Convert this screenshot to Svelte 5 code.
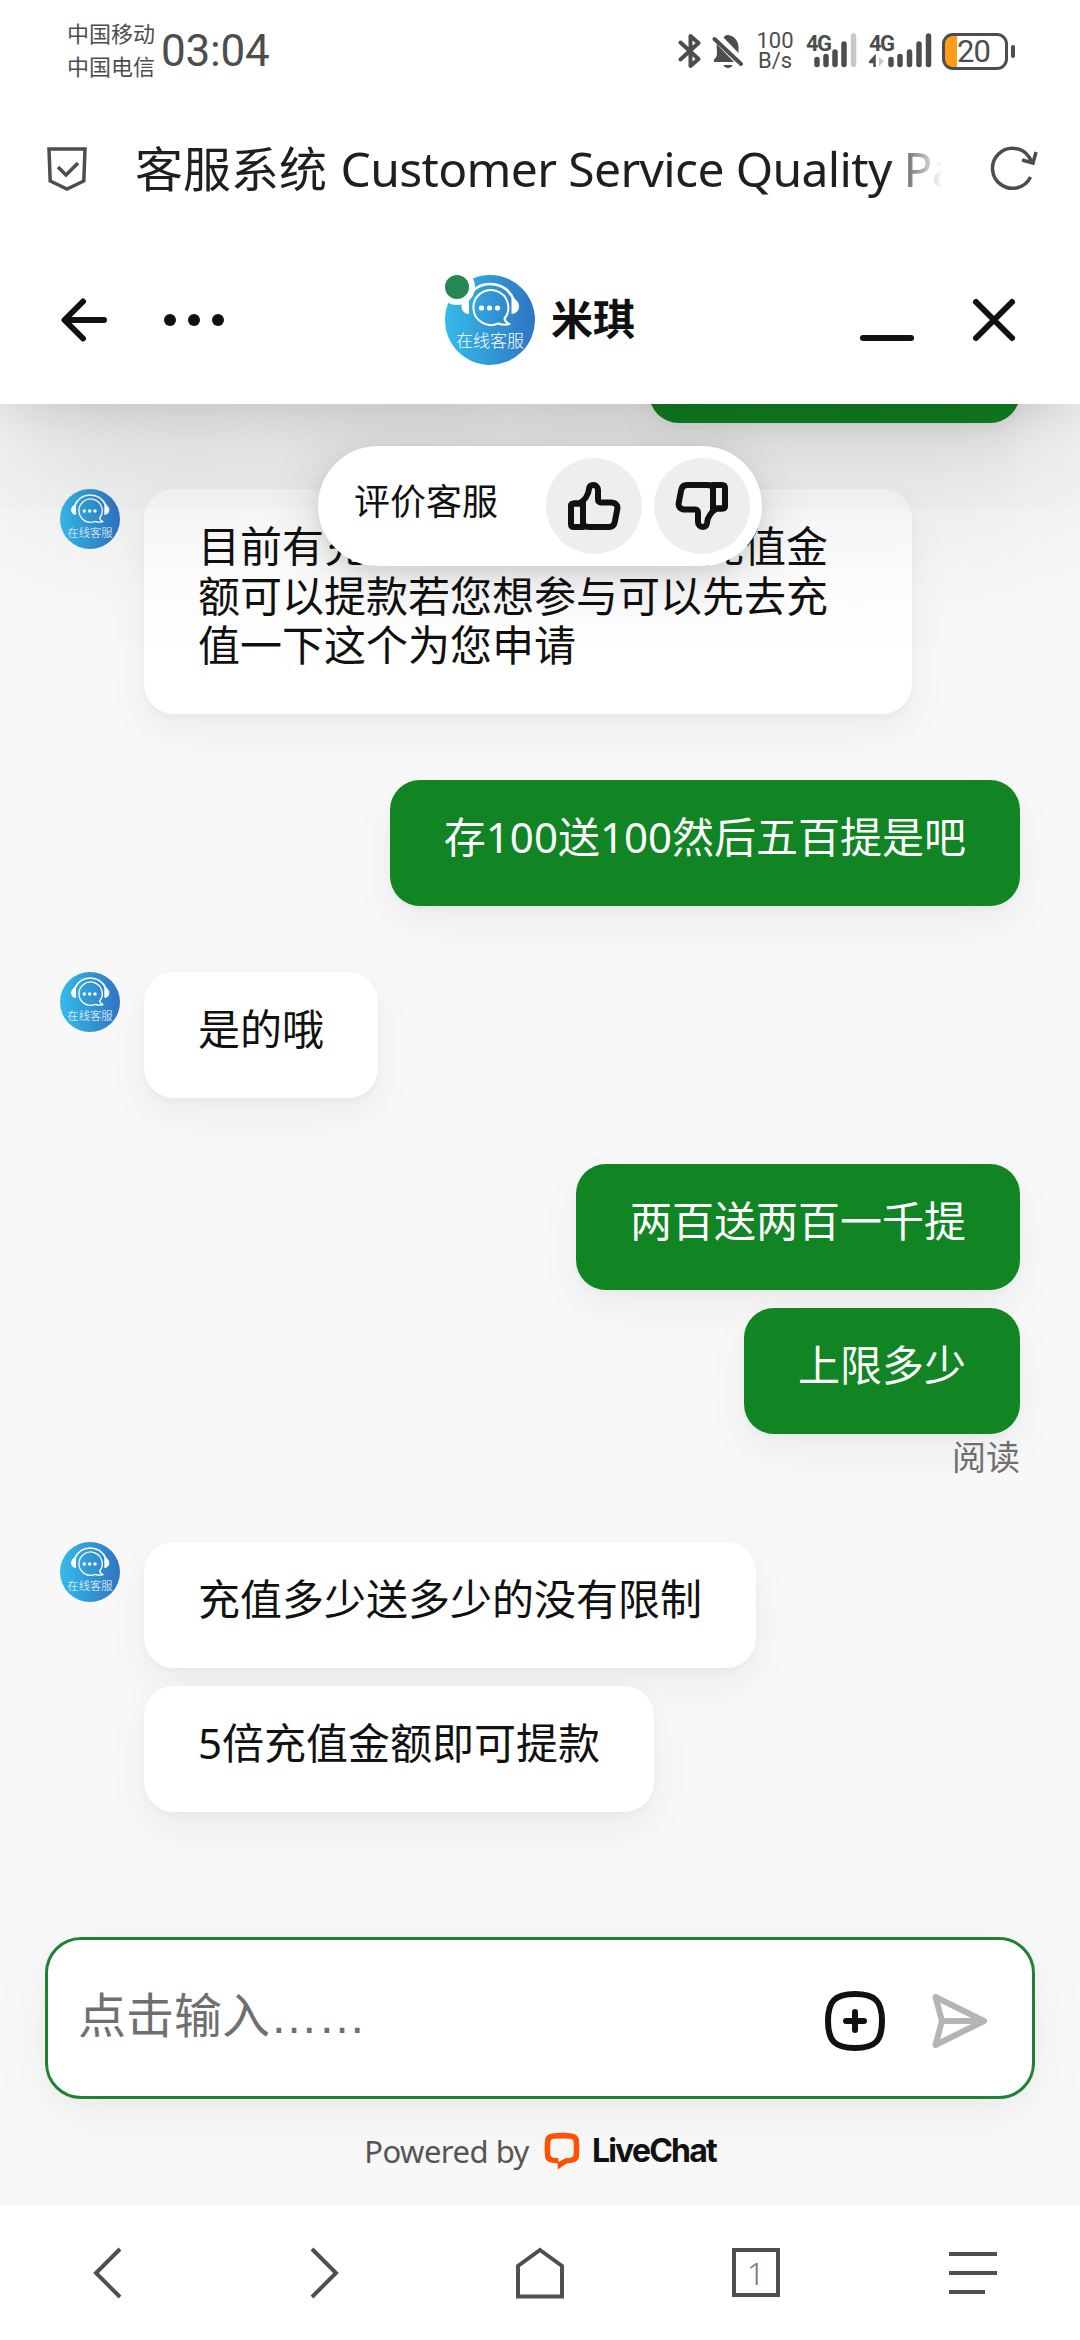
<script>
    const groups = [
        { from: "me", messages: ["存200送200几倍"], clipped: true },
        {
            from: "agent",
            messages: ["目前有充值送彩金活动五倍充值金额可以提款若您想参与可以先去充值一下这个为您申请"],
        },
        { from: "me", messages: ["存100送100然后五百提是吧"] },
        { from: "agent", messages: ["是的哦"] },
        { from: "me", messages: ["两百送两百一千提", "上限多少"], status: "阅读" },
        { from: "agent", messages: ["充值多少送多少的没有限制", "5倍充值金额即可提款"] },
    ];

    const thumb =
        "M4 24.500q0-3 3-3h5.500C16.500 19 21.500 13.500 22 7c.3-2.600 2-4 4.300-4C29 3 31 5.200 31 8v9.500c0 1.500.8 3 2.500 3H44c4.500 0 7 2.800 6.300 6.500l-2.500 13c-.6 3.200-2.700 5-5.800 5H22c-3.500 0-5.500-1-6-3.500";
</script>

{#snippet avatar()}
    <svg class="avatar-art" viewBox="0 0 90 90">
        <g fill="none" stroke="#fff" stroke-linecap="round">
            <path d="M22 25C27 14 35 9 45 9s19 5 24 16" stroke-width="2.600" />
            <path
                d="M59.500 43.500A17.500 17.500 0 1 0 53 48.500c4 1.500 8 1.500 11.500.5-3-1-4.500-3-5-5.500"
                stroke-width="2"
                stroke-linejoin="round"
            />
        </g>
        <path d="M24 22.500v16.500c-5-.5-7.500-3.500-7.500-7.500s3-7.500 7.500-9z" fill="#fff" />
        <path d="M66.500 22.500v16.500c5-.5 7.500-3.500 7.500-7.500s-3-7.500-7.500-9z" fill="#fff" />
        <g fill="#fff">
            <circle cx="36.500" cy="33" r="2.600" />
            <circle cx="44.500" cy="33" r="2.600" />
            <circle cx="52.500" cy="33" r="2.600" />
        </g>
        <text x="45" y="72" text-anchor="middle" class="avatar-label">在线客服</text>
    </svg>
{/snippet}

<div class="page">
    <div class="status-bar">
        <div class="carriers">
            <span>中国移动</span>
            <span>中国电信</span>
        </div>
        <span class="clock">03:04</span>
        <div class="status-icons">
            <svg class="bluetooth" width="24" height="36" viewBox="0 0 24 36">
                <path d="M2.500 9.500 20.500 26l-8 7V22M2.500 26.500 20.500 10l-8-7v11" />
            </svg>
            <svg class="bell" width="32" height="36" viewBox="0 0 32 36">
                <path d="M11.500 4.500C13 2.600 14.500 2 16 2c6 1 10 5 10.500 12v6z" />
                <path d="M4.500 11 22 29H2v-2.500c2-1.500 3-3.500 3-6.500z" />
                <path d="M11.500 32h9c-1 4-8 4-9 0z" />
                <path d="M2.500 6 29 31" class="slash" />
            </svg>
            <div class="speed"><span>100</span><span>B/s</span></div>
            <svg class="signal" width="54" height="38" viewBox="0 0 54 38">
                <text x="0" y="19">4G</text>
                <path d="M11 27.500v5M20 24.500v8M29 20v12.500M38 12v20.500" />
                <path d="M47.500 4v28.500" class="weak" />
            </svg>
            <svg class="signal" width="64" height="38" viewBox="0 0 64 38">
                <text x="0" y="19">4G</text>
                <path d="M22 27.500v5M31 24.500v8M40.500 20v12.500M50 12v20.500M59.500 4v28.500" />
                <path d="M5.500 35V25L1 30h4.500" class="up" />
                <path d="M10 25v9.500l5-5.500z" class="down" />
            </svg>
            <div class="battery"><span>20</span></div>
        </div>
    </div>

    <div class="address-bar">
        <svg class="shield" width="40" height="46" viewBox="0 0 40 46">
            <path d="M2 3h36l-1.200 32L20 43 3.200 35z" />
            <path d="m11 21 8 8 12-12" />
        </svg>
        <span class="page-title">客服系统 <span>Customer Service Quality Panel</span></span>
        <svg class="reload" width="48" height="48" viewBox="0 0 48 48">
            <path d="M40.500 32A20 20 0 1 1 39 12l3 5" />
            <path d="M46 7l-3 11-11-3" />
        </svg>
    </div>

    <header class="chat-header">
        <div class="header-actions">
            <svg width="48" height="48" viewBox="0 0 48 48">
                <path d="M44 24H5M23 5.500 4.500 24 23 42.500" />
            </svg>
            <svg width="60" height="12" viewBox="0 0 60 12" class="dots">
                <circle cx="6" cy="6" r="6" />
                <circle cx="30" cy="6" r="6" />
                <circle cx="54" cy="6" r="6" />
            </svg>
        </div>
        <div class="operator">
            <div class="avatar large">
                {@render avatar()}
                <span class="online"></span>
            </div>
            <span class="operator-name">米琪</span>
        </div>
        <div class="header-actions right">
            <svg width="54" height="48" viewBox="0 0 54 48"><path d="M3 42h48" /></svg>
            <svg width="48" height="48" viewBox="0 0 48 48">
                <path d="m6 6 36 36M42 6 6 42" />
            </svg>
        </div>

        <div class="rating">
            <span class="rating-label">评价客服</span>
            <button class="rate" aria-label="好评">
                <svg width="54" height="48" viewBox="0 0 54 48">
                    <path d={thumb} />
                    <path d="M16 21.500H7c-2 0-3 1-3 3V42c0 2 1 3 3 3h9z" />
                </svg>
            </button>
            <button class="rate" aria-label="差评">
                <svg class="flipped" width="54" height="48" viewBox="0 0 54 48">
                    <path d={thumb} />
                    <path d="M16 21.500H7c-2 0-3 1-3 3V42c0 2 1 3 3 3h9z" />
                </svg>
            </button>
        </div>
    </header>

    <main class="chat">
        <div class="messages">
            {#each groups as group}
                <div class="group {group.from}">
                    {#if group.from === "agent"}
                        <div class="avatar">{@render avatar()}</div>
                    {/if}
                    <div class="bubbles">
                        {#each group.messages as message}
                            <div class="bubble" class:clipped={group.clipped}>{message}</div>
                        {/each}
                        {#if group.status}
                            <span class="read">{group.status}</span>
                        {/if}
                    </div>
                </div>
            {/each}
        </div>

        <div class="composer">
            <span class="placeholder">点击输入<span class="ellipsis">……</span></span>
            <svg class="attach" width="60" height="60" viewBox="0 0 60 60">
                <path d="M30 3c20 0 27 7 27 27s-7 27-27 27S3 50 3 30 10 3 30 3z" />
                <path d="M30 21v18M21 30h18" />
            </svg>
            <svg class="send" width="60" height="60" viewBox="0 0 60 60">
                <path d="M6.500 6 55 30 6.500 54 13 30zM13 30h42" />
            </svg>
        </div>

        <div class="powered">
            <span class="powered-by">Powered by</span>
            <svg width="36" height="38" viewBox="0 0 36 38">
                <path
                    fill-rule="evenodd"
                    d="M8 1.500Q18 0 28 1.500 34.500 2.300 35 8.500q.8 8 0 16-.6 5.500-7 6.300L22.500 31.500 13.700 37.500V31.500L8 30.800Q1.500 30 1 24.500.2 16.500 1 8.500 1.500 2.300 8 1.500zM10 6.800Q6.600 7 6.400 10.500q-.5 6 0 12 .2 3 3.600 3.300l4.500.4v3.800L21.500 26.200l4.500-.4q3.400-.3 3.600-3.300.5-6 0-12Q29.400 7 26 6.800q-8-.8-16 0z"
                />
            </svg>
            <span class="brand">LiveChat</span>
        </div>
    </main>

    <nav class="browser-nav">
        <svg width="54" height="54" viewBox="0 0 54 54"><path d="M39 3 15 27l24 24" /></svg>
        <svg width="54" height="54" viewBox="0 0 54 54"><path d="m15 3 24 24-24 24" /></svg>
        <svg width="54" height="54" viewBox="0 0 54 54">
            <path d="M27 4 49 20v30.500H5V20z" />
        </svg>
        <div class="tabs">1</div>
        <svg width="54" height="54" viewBox="0 0 54 54">
            <path d="M4 8h48M4 27h48M4 46h36" />
        </svg>
    </nav>
</div>

<style>
    :global(body) {
        margin: 0;
        background: #fff;
    }

    .page {
        width: 1080px;
        height: 2340px;
        display: flex;
        flex-direction: column;
        overflow: hidden;
        background: #fff;
        color: #111;
        font-family: "Noto Sans", "Noto Sans CJK SC", sans-serif;
    }

    svg {
        display: block;
        flex: none;
        fill: none;
    }

    /* phone status bar */
    .status-bar {
        height: 102px;
        flex: none;
        box-sizing: border-box;
        display: flex;
        align-items: center;
        padding: 0 65px 0 67px;
        background: #fff;
        color: #4d4d4d;
        position: relative;
        z-index: 3;
    }

    .carriers {
        display: flex;
        flex-direction: column;
        font-size: 22px;
        line-height: 33px;
        margin-top: -3px;
    }

    .clock {
        margin-left: 6px;
        font-family: "Roboto", sans-serif;
        font-size: 44px;
        letter-spacing: -0.2px;
    }

    .status-icons {
        margin-left: auto;
        display: flex;
        align-items: center;
    }

    .bluetooth path {
        stroke: #4d4d4d;
        stroke-width: 4;
        stroke-linejoin: round;
        stroke-linecap: round;
    }

    .bell {
        margin-left: 10px;
        fill: #4d4d4d;
    }

    .bell .slash {
        stroke: #4d4d4d;
        stroke-width: 4;
        stroke-linecap: round;
    }

    .speed {
        width: 44px;
        margin-left: 9px;
        display: flex;
        flex-direction: column;
        align-items: center;
        font-family: "Roboto", sans-serif;
        font-size: 22px;
        line-height: 20px;
    }

    .signal {
        margin-left: 9px;
        stroke: #4d4d4d;
        stroke-width: 5.500;
        stroke-linecap: round;
    }

    .signal text {
        font-family: "Roboto", sans-serif;
        font-size: 22px;
        font-weight: 700;
        letter-spacing: -1.500px;
        fill: #4d4d4d;
        stroke: none;
    }

    .signal .weak {
        stroke: #c8c8c8;
    }

    .signal .up {
        stroke-width: 2.500;
        stroke-linecap: butt;
    }

    .signal .down {
        fill: #c8c8c8;
        stroke: none;
    }

    .battery {
        width: 66px;
        height: 37px;
        margin-left: 9px;
        margin-right: 7px;
        box-sizing: border-box;
        border: 3px solid #4d4d4d;
        border-radius: 11px;
        background: linear-gradient(90deg, #ff9c1a 12px, #fff 12px);
        position: relative;
        font-family: "Roboto", sans-serif;
        font-size: 31px;
        line-height: 31px;
        padding-left: 12px;
        letter-spacing: -0.8px;
    }

    .battery::after {
        content: "";
        position: absolute;
        right: -10px;
        top: 9px;
        width: 4px;
        height: 13px;
        border-radius: 2px;
        background: #4d4d4d;
    }

    /* browser address bar */
    .address-bar {
        height: 134px;
        flex: none;
        box-sizing: border-box;
        display: flex;
        align-items: center;
        padding: 0 42px 0 47px;
        background: #fff;
        position: relative;
        z-index: 3;
    }

    .shield path,
    .reload path {
        stroke: #4d4d4d;
        stroke-width: 3.500;
    }

    .page-title {
        width: 808px;
        margin-left: 48px;
        overflow: hidden;
        white-space: nowrap;
        font-size: 48px;
        line-height: 70px;
        color: #1f1f1f;
        -webkit-mask-image: linear-gradient(90deg, #000 750px, transparent 808px);
        mask-image: linear-gradient(90deg, #000 750px, transparent 808px);
    }

    .page-title span {
        margin-left: 1px;
        letter-spacing: -0.650px;
    }

    .reload {
        margin-left: auto;
    }

    /* chat widget header */
    .chat-header {
        height: 168px;
        flex: none;
        box-sizing: border-box;
        padding: 0 60px;
        display: grid;
        grid-template-columns: 1fr auto 1fr;
        align-items: center;
        background: #fff;
        position: relative;
        z-index: 2;
        box-shadow:
            0 12px 48px -12px rgba(0, 0, 0, 0.14),
            0 60px 190px rgba(0, 0, 0, 0.18);
    }

    .header-actions {
        display: flex;
        align-items: center;
        gap: 56px;
        stroke: #111;
        stroke-width: 6;
        stroke-linecap: round;
        stroke-linejoin: round;
    }

    .header-actions.right {
        justify-content: flex-end;
        padding-right: 2px;
    }

    .dots {
        fill: #111;
        stroke: none;
    }

    .operator {
        display: flex;
        align-items: center;
        gap: 16px;
    }

    .operator-name {
        margin-top: -3px;
        font-size: 42px;
        font-weight: 700;
        line-height: 60px;
    }

    .avatar {
        width: 60px;
        height: 60px;
        flex: none;
        border-radius: 50%;
        background: linear-gradient(90deg, #35bbea, #2f74c2);
        position: relative;
    }

    .avatar.large {
        width: 90px;
        height: 90px;
    }

    .avatar-art {
        width: 100%;
        height: 100%;
    }

    .avatar-label {
        font-family: "Noto Sans CJK SC", sans-serif;
        font-size: 17px;
        font-weight: 300;
        fill: #fff;
    }

    .online {
        position: absolute;
        left: -6px;
        top: -6px;
        width: 24px;
        height: 24px;
        border: 6px solid #fff;
        border-radius: 50%;
        background: #268750;
    }

    .rating {
        position: absolute;
        left: 318px;
        top: 210px;
        width: 444px;
        height: 120px;
        box-sizing: border-box;
        padding: 12px 12px 12px 36px;
        display: flex;
        align-items: center;
        gap: 12px;
        border-radius: 60px;
        background: #fff;
        box-shadow:
            0 6px 18px rgba(0, 0, 0, 0.08),
            0 12px 60px rgba(0, 0, 0, 0.14);
    }

    .rating-label {
        flex: 1;
        margin-top: -9px;
        font-size: 36px;
        line-height: 50px;
    }

    .rate {
        width: 96px;
        height: 96px;
        padding: 0;
        border: 0;
        border-radius: 50%;
        background: #eee;
        display: grid;
        place-items: center;
    }

    .rate path {
        stroke: #111;
        stroke-width: 6;
        stroke-linejoin: round;
    }

    .flipped {
        transform: rotate(180deg);
    }

    /* conversation */
    .chat {
        flex: 1;
        min-height: 0;
        display: flex;
        flex-direction: column;
        background: #f8f8f8;
        overflow: hidden;
    }

    .messages {
        flex: 1;
        min-height: 0;
        display: flex;
        flex-direction: column;
        justify-content: flex-end;
        gap: 66px;
        padding: 0 60px 125px;
    }

    .group {
        display: flex;
        align-items: flex-start;
        gap: 24px;
    }

    .group.me {
        justify-content: flex-end;
    }

    .bubbles {
        display: flex;
        flex-direction: column;
        align-items: flex-start;
        gap: 18px;
    }

    .me .bubbles {
        align-items: flex-end;
    }

    .bubble {
        max-width: 768px;
        box-sizing: border-box;
        padding: 32px 54px 44.500px;
        border-radius: 30px;
        background: #fff;
        font-size: 42px;
        line-height: 49.500px;
        box-shadow:
            0 3px 9px rgba(0, 0, 0, 0.03),
            0 18px 42px rgba(0, 0, 0, 0.05);
    }

    .me .bubble {
        background: #118423;
        color: #fff;
    }

    .bubble.clipped {
        width: 371px;
        padding-right: 0;
    }

    .read {
        margin-top: -14px;
        font-size: 34px;
        line-height: 38px;
        color: #707070;
    }

    .composer {
        height: 162px;
        flex: none;
        box-sizing: border-box;
        margin: 0 45px;
        padding: 6px 43px 0 30px;
        display: flex;
        align-items: center;
        border: 3px solid #228036;
        border-radius: 36px;
        background: #fff;
        box-shadow:
            0 6px 18px rgba(0, 0, 0, 0.03),
            0 18px 72px rgba(0, 0, 0, 0.04);
    }

    .placeholder {
        flex: 1;
        margin-top: -10px;
        font-size: 48px;
        line-height: 60px;
        color: #6f6f6f;
    }

    .ellipsis {
        font-family: "Liberation Sans", sans-serif;
    }

    .attach path,
    .send path {
        stroke: #111;
        stroke-width: 6;
        stroke-linecap: round;
        stroke-linejoin: round;
    }

    .send {
        margin-left: 44px;
    }

    .send path {
        stroke: #b4b4b4;
    }

    .powered {
        height: 104px;
        padding-bottom: 2px;
        flex: none;
        display: flex;
        align-items: center;
        justify-content: center;
        font-size: 31px;
        line-height: 44px;
    }

    .powered svg {
        margin: 0 12px 0 15px;
        fill: #ff5100;
    }

    .powered-by {
        letter-spacing: -0.500px;
        color: #555;
    }

    .brand {
        font-family: "Inter", sans-serif;
        font-size: 32px;
        font-weight: 700;
        letter-spacing: -1.800px;
    }

    /* browser toolbar */
    .browser-nav {
        height: 135px;
        flex: none;
        display: grid;
        grid-template-columns: repeat(5, 1fr);
        place-items: center;
        background: #fff;
    }

    .browser-nav path {
        stroke: #4f4f4f;
        stroke-width: 4;
    }

    .tabs {
        width: 48px;
        height: 49px;
        box-sizing: border-box;
        border: 4px solid #4f4f4f;
        font-size: 32px;
        font-weight: 300;
        line-height: 42px;
        text-align: center;
        color: #777;
    }
</style>
